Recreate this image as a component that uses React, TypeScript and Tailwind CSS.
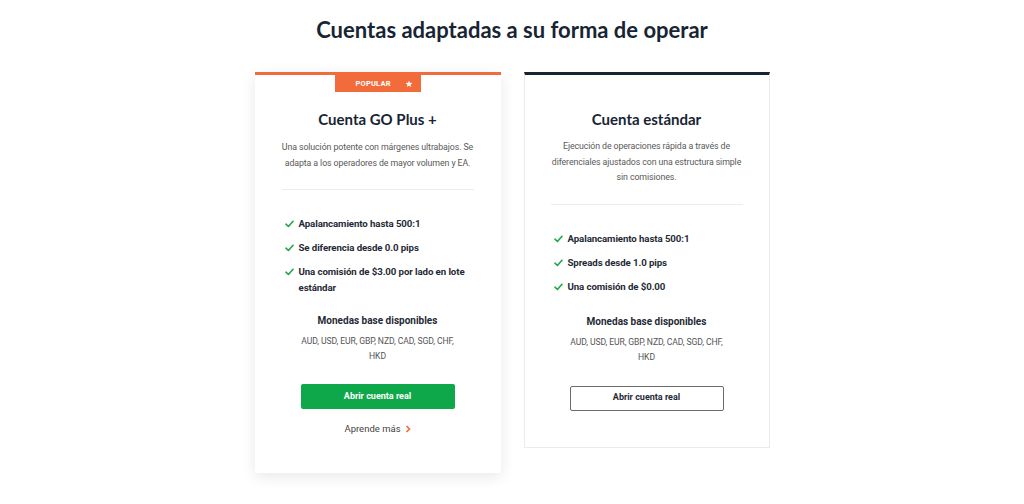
import React from "react";

const heading = { fontFamily: "Lato, 'Open Sans', sans-serif" };
const body = { fontFamily: "Roboto, 'Liberation Sans', sans-serif" };

function Check() {
  return (
    <svg width="9" height="8" viewBox="0 0 9 8" className="mt-[4px] shrink-0">
      <polyline points="1,4.2 3.4,6.5 8,1.3" fill="none" stroke="#1fa64a" strokeWidth="1.6" strokeLinecap="round" strokeLinejoin="round" />
    </svg>
  );
}

function Features({ items }: { items: string[] }) {
  return (
    <ul className="flex flex-col gap-2 pl-[3px]">
      {items.map((t) => (
        <li key={t} className="flex items-start gap-[5px] text-[9.7px] font-bold leading-4 tracking-[-0.1px] text-[#1f2a35]">
          <Check />
          <span>{t}</span>
        </li>
      ))}
    </ul>
  );
}

function Currencies({ top }: { top: string }) {
  return (
    <>
      <div className={`${top} text-center text-[10px] font-bold leading-4 text-[#1f2a35]`}>
        Monedas base disponibles
      </div>
      <div className="mx-auto mt-[5px] w-[165px] text-center text-[8.6px] leading-[15px] tracking-[-0.1px] text-[#555]">
        AUD, USD, EUR, GBP, NZD, CAD, SGD, CHF, HKD
      </div>
    </>
  );
}

export default function App() {
  return (
    <div className="min-h-[504px] w-full bg-white" style={body}>
      <div className="flex flex-col items-center pt-4">
        <h1 className="text-[22px] font-bold leading-7 text-[#172433]" style={heading}>
          Cuentas adaptadas a su forma de operar
        </h1>

        <div className="mt-7 flex items-start gap-[23px]">
          {/* GO PLUS */}
          <div className="relative w-[246px] border-t-[3px] border-[#f26b3a] bg-white px-[27px] pb-[36px] pt-[32px] shadow-[0_4px_14px_rgba(0,0,0,0.09)]">
            <div className="absolute left-[80px] top-0 flex h-[17px] w-[86px] items-center justify-between bg-[#f26b3a] pl-[21px] pr-[8px]">
              <span className="text-[7.5px] font-bold tracking-[0.2px] text-white">POPULAR</span>
              <svg width="8" height="8" viewBox="0 0 24 24">
                <path d="M12 2l2.9 6.6 7.1.6-5.4 4.7 1.6 7-6.2-3.8-6.2 3.8 1.6-7L2 9.2l7.1-.6z" fill="#fff" />
              </svg>
            </div>

            <h2 className="text-center text-[15px] font-bold leading-6 text-[#172433]" style={heading}>
              Cuenta GO Plus +
            </h2>
            <p className="mt-2 whitespace-nowrap text-center text-[8.8px] leading-4 tracking-[-0.1px] text-[#595959]">
              Una solución potente con márgenes ultrabajos. Se
              <br />
              adapta a los operadores de mayor volumen y EA.
            </p>
            <div className="mb-[26px] mt-[18px] h-px bg-[#ececec]" />

            <Features
              items={[
                "Apalancamiento hasta 500:1",
                "Se diferencia desde 0.0 pips",
                "Una comisión de $3.00 por lado en lote estándar",
              ]}
            />
            <Currencies top="mt-[17px]" />

            <button className="mx-auto mt-[20px] flex h-[25px] w-[154px] items-center justify-center rounded-[2px] bg-[#0ea84a] text-[9px] font-bold text-white">
              Abrir cuenta real
            </button>
            <div className="mt-3 flex items-center justify-center gap-[4px] text-[9.5px] leading-4 text-[#444]">
              <span>Aprende más</span>
              <svg width="6" height="8" viewBox="0 0 6 8">
                <polyline points="1.5,1 4.5,4 1.5,7" fill="none" stroke="#f26b3a" strokeWidth="1.6" />
              </svg>
            </div>
          </div>

          {/* ESTANDAR */}
          <div className="w-[246px] border border-t-[3px] border-[#ebebeb] border-t-[#172433] bg-white px-[26px] pb-[36px] pt-[32px]">
            <h2 className="text-center text-[15px] font-bold leading-6 text-[#172433]" style={heading}>
              Cuenta estándar
            </h2>
            <p className="mt-2 whitespace-nowrap text-center text-[8.8px] leading-[15.5px] tracking-[-0.1px] text-[#595959]">
              Ejecución de operaciones rápida a través de
              <br />
              diferenciales ajustados con una estructura simple
              <br />
              sin comisiones.
            </p>
            <div className="mb-[26px] mt-[18px] h-px bg-[#ececec]" />

            <Features
              items={["Apalancamiento hasta 500:1", "Spreads desde 1.0 pips", "Una comisión de $0.00"]}
            />
            <Currencies top="mt-[19px]" />

            <button className="mx-auto mt-[21px] flex h-[25px] w-[154px] items-center justify-center rounded-[2px] border border-[#6b6b6b] bg-white text-[9px] font-bold text-[#1f2a35]">
              Abrir cuenta real
            </button>
          </div>
        </div>
      </div>
    </div>
  );
}
